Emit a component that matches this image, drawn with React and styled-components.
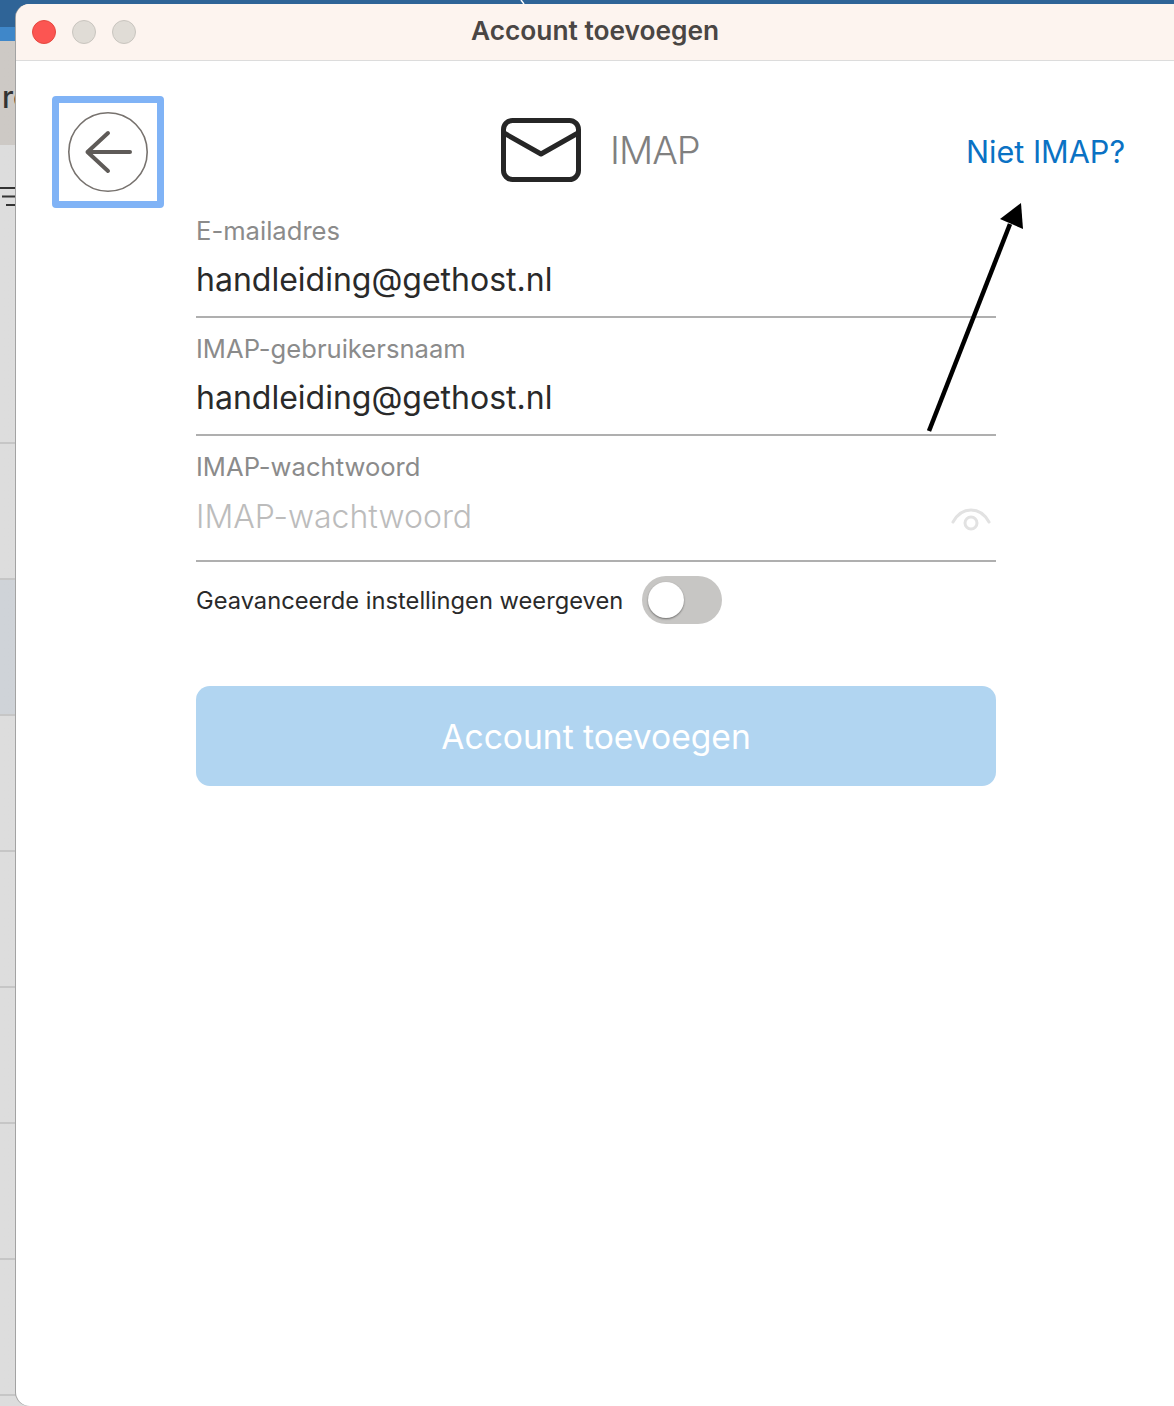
import React from 'react'
import styled, { createGlobalStyle } from 'styled-components'

const Global = createGlobalStyle`
  html, body {
    margin: 0;
    padding: 0;
    background: #fff;
  }
  body {
    font-family: Inter, "Liberation Sans", sans-serif;
  }
`

const Page = styled.div`
  position: relative;
  width: 1174px;
  height: 1406px;
  overflow: hidden;
  background: #dcdcdc;
`

const BlueBar = styled.div`
  height: 27px;
  background: #2f6497;
`

const LightBar = styled.div`
  height: 14px;
  background: #3f87c9;
`

const HeaderBg = styled.div`
  height: 104px;
  background: linear-gradient(to right, #cdc9c5, #c4c0bb);
  font-size: 30px;
  font-weight: 500;
  line-height: 112px;
  color: #333;
  text-indent: 2px;
  overflow: hidden;
`

const ListHead = styled.div`
  height: 297px;
  background: linear-gradient(to right, #dddddd, #d2d2d2);
  padding-top: 41px;
  box-sizing: border-box;
`

const Hamburger = styled.svg`
  display: block;
`

const ListRow = styled.div`
  height: 135px;
  border-top: 2px solid #c6c6c6;
  margin-bottom: -1px;
  background: ${p =>
    p.$selected
      ? 'linear-gradient(to right, #cfd3d8, #c3c8ce)'
      : 'linear-gradient(to right, #dddddd, #d2d2d2)'};
`

const Win = styled.div`
  position: absolute;
  left: 16px;
  top: 4px;
  width: 1170px;
  height: 1402px;
  border-radius: 14px 0 0 14px;
  background: #fff;
  box-shadow: -1px 0 0 #a3a3a3;
  overflow: hidden;
`

const TitleBar = styled.div`
  position: relative;
  height: 56px;
  background: #fdf4ef;
  border-bottom: 1px solid #dcdcdc;
  display: flex;
  align-items: center;
  justify-content: center;
  padding-right: 12px;
`

const Lights = styled.div`
  position: absolute;
  left: 16px;
  top: 16px;
  display: flex;
  gap: 16px;
`

const Light = styled.span`
  width: 24px;
  height: 24px;
  border-radius: 50%;
  box-sizing: border-box;
  background: ${p => (p.$red ? '#fc5552' : '#e0dcd6')};
  border: 1px solid ${p => (p.$red ? '#e5483f' : '#c9c5bf')};
`

const Title = styled.div`
  font-size: 26.3px;
  font-weight: 600;
  line-height: 54px;
  margin-top: -2px;
  color: #4a4644;
`

const Body = styled.div`
  display: grid;
  grid-template-columns: 180px 800px 1fr;
  padding-top: 35px;
`

const BackCol = styled.div`
  padding-left: 36px;
`

const BackBtn = styled.button`
  width: 112px;
  height: 112px;
  box-sizing: border-box;
  border: 7px solid #80b3f6;
  border-radius: 4px;
  background: #fff;
  padding: 0;
  display: flex;
  align-items: center;
  justify-content: center;
`

const Main = styled.div`
  display: flex;
  flex-direction: column;
`

const ProviderRow = styled.div`
  height: 104px;
  display: flex;
  align-items: flex-start;
  padding: 22px 0 0 305px;
  box-sizing: border-box;
  gap: 29px;
`

const ProviderName = styled.div`
  font-size: 38px;
  font-weight: 300;
  letter-spacing: -1px;
  line-height: 62px;
  margin-top: 1px;
  color: #808080;
`

const Field = styled.div`
  height: ${p => (p.$tall ? 126 : 118)}px;
  padding-top: 15px;
  border-bottom: 2px solid #afafaf;
  box-sizing: border-box;
  display: flex;
  flex-direction: column;
  position: relative;
`

const FieldLabel = styled.label`
  font-size: 25.6px;
  line-height: 32px;
  color: #8b8b8b;
`

const FieldValue = styled.div`
  font-size: 32px;
  font-weight: ${p => (p.$placeholder ? 300 : 400)};
  line-height: 48px;
  margin-top: ${p => (p.$placeholder ? 10 : 9)}px;
  color: ${p => (p.$placeholder ? '#bcbcbc' : '#2a2a2a')};
`

const EyeIcon = styled.svg`
  position: absolute;
  right: 5px;
  top: 71px;
`

const ToggleRow = styled.div`
  display: flex;
  align-items: center;
  gap: 19px;
  margin-top: 14px;
`

const ToggleLabel = styled.span`
  font-size: 23.7px;
  color: #2a2a2a;
`

const Toggle = styled.span`
  width: 80px;
  height: 48px;
  border-radius: 24px;
  background: #c7c6c4;
  display: flex;
  align-items: center;
  padding-left: 6px;
  box-sizing: border-box;
`

const Knob = styled.span`
  width: 36px;
  height: 36px;
  border-radius: 50%;
  background: #fff;
  box-shadow: 0 1px 2px rgba(0, 0, 0, 0.45);
`

const Submit = styled.button`
  margin-top: 62px;
  height: 100px;
  border: none;
  border-radius: 14px;
  background: #b1d5f1;
  color: #fff;
  font-family: inherit;
  font-size: 33.6px;
  font-weight: 400;
`

const HelpLink = styled.a`
  display: block;
  margin-left: -30px;
  margin-top: 36px;
  font-size: 30.6px;
  line-height: 40px;
  color: #0a72c4;
  white-space: nowrap;
`

const Callout = styled.svg`
  position: absolute;
  left: 900px;
  top: 190px;
  pointer-events: none;
`

const Sliver = styled.svg`
  position: absolute;
  left: 518px;
  top: 0;
`

export default function App() {
  return (
    <Page>
      <Global />
      <BlueBar />
      <LightBar />
      <HeaderBg>re</HeaderBg>
      <ListHead>
        <Hamburger width="16" height="22" viewBox="0 0 16 22">
          <path d="M0 2h16M2 10.5h14M6 19h10" stroke="#333" strokeWidth="2" />
        </Hamburger>
      </ListHead>
      {[0, 1, 2, 3, 4, 5, 6, 7].map(i => (
        <ListRow key={i} $selected={i === 1} />
      ))}
      <Sliver width="10" height="4" viewBox="0 0 10 4">
        <path d="M3 0l3 4" stroke="#fff" strokeWidth="1.5" />
      </Sliver>
      <Win>
        <TitleBar>
          <Lights>
            <Light $red />
            <Light />
            <Light />
          </Lights>
          <Title>Account toevoegen</Title>
        </TitleBar>
        <Body>
          <BackCol>
            <BackBtn aria-label="Terug">
              <svg width="82" height="82" viewBox="0 0 82 82" fill="none">
                <circle cx="41" cy="41" r="39.2" stroke="#77726e" strokeWidth="1.6" />
                <path d="M63 41H20.5M41 22L20.5 41 41 60" stroke="#5f5b58" strokeWidth="4" strokeLinecap="round" strokeLinejoin="round" />
              </svg>
            </BackBtn>
          </BackCol>
          <Main>
            <ProviderRow>
              <svg width="80" height="64" viewBox="0 0 80 64" fill="none">
                <rect x="2.5" y="2.5" width="75" height="59" rx="9" stroke="#262626" strokeWidth="5" />
                <path d="M3 15l37 21 37-21" stroke="#262626" strokeWidth="5" strokeLinejoin="round" />
              </svg>
              <ProviderName>IMAP</ProviderName>
            </ProviderRow>
            <Field>
              <FieldLabel>E-mailadres</FieldLabel>
              <FieldValue>handleiding@gethost.nl</FieldValue>
            </Field>
            <Field>
              <FieldLabel>IMAP-gebruikersnaam</FieldLabel>
              <FieldValue>handleiding@gethost.nl</FieldValue>
            </Field>
            <Field $tall>
              <FieldLabel>IMAP-wachtwoord</FieldLabel>
              <FieldValue $placeholder>IMAP-wachtwoord</FieldValue>
              <EyeIcon width="40" height="26" viewBox="0 0 40 26" fill="none">
                <path d="M2 15C7 6 13 3 20 3s13 3 18 12" stroke="#e2e2e2" strokeWidth="3" strokeLinecap="round" />
                <circle cx="20" cy="16" r="6" stroke="#e2e2e2" strokeWidth="3" />
              </EyeIcon>
            </Field>
            <ToggleRow>
              <ToggleLabel>Geavanceerde instellingen weergeven</ToggleLabel>
              <Toggle>
                <Knob />
              </Toggle>
            </ToggleRow>
            <Submit>Account toevoegen</Submit>
          </Main>
          <div>
            <HelpLink>Niet IMAP?</HelpLink>
          </div>
        </Body>
      </Win>
      <Callout width="140" height="250" viewBox="0 0 140 250" fill="none">
        <path d="M29 241L110 34" stroke="#000" strokeWidth="4.5" />
        <path d="M121 13l2 26-23-10z" fill="#000" />
      </Callout>
    </Page>
  )
}
